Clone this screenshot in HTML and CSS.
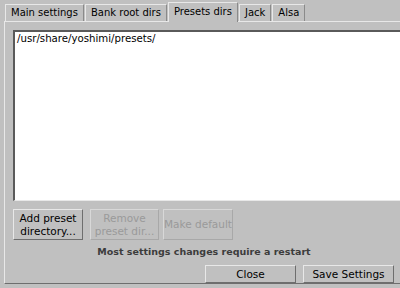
FILE: index.html
```html
<!DOCTYPE html>
<html>
<head>
    <meta charset="UTF-8">
    <title>Settings</title>
    <link rel="stylesheet" href="styles.css">
</head>
<body>
    <div class="window">
        <div class="tabs">
            <div class="tab">Main settings</div>
            <div class="tab">Bank root dirs</div>
            <div class="tab active">Presets dirs</div>
            <div class="tab">Jack</div>
            <div class="tab">Alsa</div>
        </div>
        <div class="panel">
            <div class="dirlist">
                <div class="dir">/usr/share/yoshimi/presets/</div>
            </div>
            <div class="actions">
                <button class="btn">Add preset<br>directory...</button>
                <button class="btn off">Remove<br>preset dir...</button>
                <button class="btn off">Make default</button>
            </div>
            <p class="note">Most settings changes require a restart</p>
        </div>
    </div>
    <div class="footer">
        <button class="btn wide">Close</button>
        <button class="btn wide">Save Settings</button>
    </div>
</body>
</html>
```

FILE: styles.css
```css
body {
    margin: 0;
    background-color: #c0c0c0;
    font-family: "DejaVu Sans", sans-serif;
    font-size: 10px;
    color: #000000;
    overflow: hidden;
    width: 400px;
    height: 288px;
    position: relative;
}
.window {
    padding: 3px 0 0 4px;
    width: 396px;
    overflow: hidden;
}
.tabs {
    display: flex;
    align-items: flex-end;
    height: 18px;
    padding-left: 1px;
}
.tab {
    height: 16px;
    line-height: 16px;
    padding: 0 5px;
    margin-right: 1px;
    border-top: 1px solid #e8e8e8;
    border-left: 1px solid #e8e8e8;
    border-right: 1px solid #8a8a8a;
    background-color: #c0c0c0;
}
.tab.active {
    height: 19px;
    line-height: 18px;
    margin-bottom: -1px;
    position: relative;
}
.panel {
    width: 420px;
    height: 263px;
    box-sizing: border-box;
    border-top: 1px solid #e8e8e8;
    border-left: 1px solid #e8e8e8;
    border-bottom: 1px solid #6e6e6e;
    padding: 8px 0 0 8px;
}
.dirlist {
    height: 171px;
    box-sizing: border-box;
    background-color: #ffffff;
    border-top: 2px solid #5a5a5a;
    border-left: 2px solid #5a5a5a;
    border-bottom: 1px solid #e8e8e8;
    padding: 0 2px;
}
.dir {
    font-size: 10.2px;
    line-height: 13px;
}
.actions {
    display: flex;
    margin-top: 8px;
}
.btn {
    font-family: "DejaVu Sans", sans-serif;
    font-size: 10.5px;
    line-height: 13px;
    background-color: #c0c0c0;
    color: #000000;
    border: 1px solid;
    border-color: #e8e8e8 #6e6e6e #6e6e6e #e8e8e8;
    border-radius: 0;
    padding: 0;
    width: 70px;
    height: 31px;
    margin-right: 7px;
}
.btn.off {
    color: #9a9a9a;
    border-color: #d8d8d8 #a8a8a8 #a8a8a8 #d8d8d8;
}
.actions .btn:nth-child(2) {
    width: 69px;
    margin-right: 4px;
}
.note {
    margin: 6px 0 0 0;
    width: 382px;
    text-align: center;
    font-weight: bold;
    font-size: 9.5px;
    color: #3c3c3c;
}
.footer {
    position: absolute;
    left: 205px;
    top: 265px;
    display: flex;
}
.btn.wide {
    width: 91px;
    height: 18px;
    margin-right: 7px;
    font-size: 10.5px;
}
```
